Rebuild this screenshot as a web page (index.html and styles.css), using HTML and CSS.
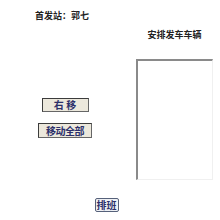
FILE: index.html
```html
<!DOCTYPE html>
<html lang="zh-CN">
<head>
    <meta charset="UTF-8">
    <title>安排发车车辆</title>
    <link rel="stylesheet" href="styles.css">
</head>
<body>
    <div class="page">
        <div class="station">首发站：郭七</div>

        <div class="main">
            <div class="actions">
                <button class="btn btn-right">右 移</button>
                <button class="btn btn-all">移动全部</button>
            </div>
            <div class="picked">
                <div class="picked-title">安排发车车辆</div>
                <div class="picked-list" role="listbox"></div>
            </div>
        </div>

        <div class="footer">
            <button class="btn-plan">排班</button>
        </div>
    </div>
</body>
</html>
```

FILE: styles.css
```css
* {
    margin: 0;
    padding: 0;
    box-sizing: border-box;
}

body {
    font-family: "Noto Sans CJK SC", "DejaVu Sans", sans-serif;
    font-size: 9px;
    font-weight: bold;
    color: #222;
    background: #fff;
}

.page {
    width: 220px;
    height: 220px;
    padding-top: 11px;
}

.station {
    margin-left: 35px;
    line-height: 10px;
    height: 10px;
}

.main {
    display: flex;
    height: 170px;
}

.actions {
    width: 130px;
    display: flex;
    flex-direction: column;
    align-items: center;
    padding-top: 77px;
    gap: 11px;
}

.btn {
    font-family: inherit;
    font-weight: bold;
    font-size: 10px;
    line-height: 12px;
    color: #2b2f6a;
    background: #ece8dc;
    border: 1px solid #3c3c3c;
    border-right-color: #666;
    border-bottom-color: #666;
}

.btn-right {
    width: 47px;
    height: 14px;
}

.btn-all {
    width: 54px;
    height: 15px;
    letter-spacing: -0.5px;
}

.picked {
    margin-left: 6px;
    width: 77px;
    padding-top: 9px;
}

.picked-title {
    text-align: center;
    line-height: 10px;
    height: 29px;
}

.picked-list {
    width: 77px;
    height: 121px;
    border-top: 2px solid #8a8a8a;
    border-left: 2px solid #8a8a8a;
    border-right: 1px solid #f0f0f0;
    border-bottom: 1px solid #f0f0f0;
    background: #fff;
}

.footer {
    display: flex;
    justify-content: center;
    padding-right: 7px;
}

.btn-plan {
    width: 24px;
    height: 14px;
    font-family: inherit;
    font-weight: bold;
    font-size: 10px;
    line-height: 10px;
    color: #2b2f6a;
    background: #eef0f4;
    border: 1px solid #56617a;
    border-radius: 2px;
    margin-top: 7px;
}
```
